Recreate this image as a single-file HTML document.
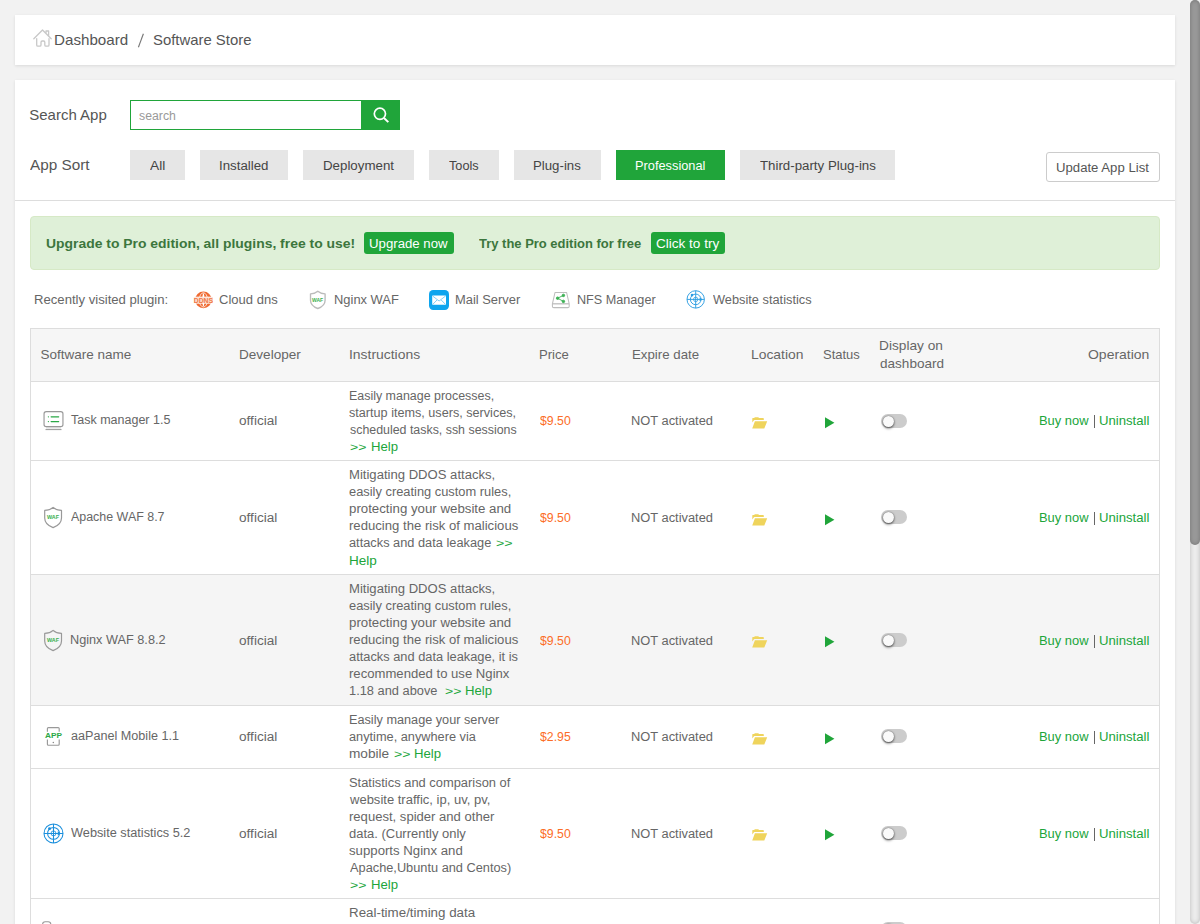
<!DOCTYPE html>
<html><head><meta charset="utf-8"><title>Software Store</title>
<style>
html,body{margin:0;padding:0}
body{width:1200px;height:924px;overflow:hidden;position:relative;background:#f2f2f2;font-family:"Liberation Sans",sans-serif}
.a{position:absolute}
.t{position:absolute;white-space:pre;line-height:1;transform-origin:0 0}
.card{position:absolute;background:#fff;box-shadow:0 1px 3px rgba(0,0,0,.10)}
.sb{position:absolute;top:150px;height:30px;background:#e6e6e6}
.gb{position:absolute;top:232px;height:22px;background:#20a53a;border-radius:3px}
.hl{position:absolute;left:30px;width:1130px;height:1px;background:#ddd}
.tg{position:absolute;width:26px;height:14px;border-radius:7px;background:#ccc}
.tg i{position:absolute;left:1.8px;top:1.7px;width:11px;height:11px;border-radius:6px;background:#fafafa;box-shadow:0 1.5px 2.5px rgba(0,0,0,.5),0 0 1.5px rgba(0,0,0,.55)}
svg{position:absolute;overflow:visible}
</style></head><body>


<div class="card" style="left:15px;top:15px;width:1160px;height:50px"></div>
<div class="card" style="left:15px;top:80px;width:1160px;height:860px"></div>
<svg style="left:33px;top:28px" width="20" height="20" viewBox="0 0 20 20" fill="none" stroke="#c8c8c8" stroke-width="1.3" stroke-linecap="round" stroke-linejoin="round">
<path d="M0.8 10.8L9.5 2L18.2 10.8"/><path d="M13 4.6V3H15.6V7.6"/>
<path d="M3.7 10.6V17Q3.7 18.2 4.9 18.2H6.8Q8 18.2 8 17V14.2Q8 13 9.2 13H10.6Q11.8 13 11.8 14.2V17Q11.8 18.2 13 18.2H14.8Q16 18.2 16 17V10.6"/></svg>
<div class="a" style="left:130px;top:100px;width:230px;height:28px;border:1px solid #20a53a;background:#fff"></div>
<div class="a" style="left:361px;top:100px;width:39px;height:30px;background:#20a53a"></div>
<svg style="left:361px;top:100px" width="39" height="30" viewBox="0 0 39 30" fill="none" stroke="#fff" stroke-width="1.7" stroke-linecap="round"><circle cx="18.9" cy="13.8" r="5.6"/><path d="M23 18L27.3 22.1" stroke-width="2" stroke-linecap="butt"/></svg>
<div class="sb" style="left:130px;width:55px"></div>
<div class="sb" style="left:200px;width:88px"></div>
<div class="sb" style="left:303px;width:111px"></div>
<div class="sb" style="left:429px;width:70px"></div>
<div class="sb" style="left:514px;width:87px"></div>
<div class="sb" style="left:616px;width:109px;background:#20a53a"></div>
<div class="sb" style="left:740px;width:155px"></div>
<div class="a" style="left:1046px;top:152px;width:112px;height:28px;border:1px solid #ccc;border-radius:3px;background:#fff"></div>
<div class="a" style="left:15px;top:200px;width:1160px;height:1px;background:#ddd"></div>
<div class="a" style="left:30px;top:216px;width:1128px;height:52px;border:1px solid #d6e9c6;border-radius:4px;background:#dff0d8"></div>
<div class="gb" style="left:364px;width:90px"></div><div class="gb" style="left:651px;width:74px"></div>
<div class="a" style="left:30px;top:328px;width:1128px;height:620px;border:1px solid #ddd;border-bottom:none"></div>
<div class="a" style="left:31px;top:329px;width:1128px;height:52px;background:#f6f6f6"></div>
<div class="a" style="left:31px;top:575px;width:1128px;height:130px;background:#f5f5f5"></div>
<div class="hl" style="top:381px"></div>
<div class="hl" style="top:460px"></div>
<div class="hl" style="top:574px"></div>
<div class="hl" style="top:705px"></div>
<div class="hl" style="top:768px"></div>
<div class="hl" style="top:898px"></div>
<svg style="left:751.6px;top:416.6px" width="16" height="12" viewBox="0 0 16 12"><path fill="#efd45c" d="M0.3 5.6V1.6Q0.3 1.1 .8 1.1H2.2L2.8 .2H6.4L6.9 1.1H11.2Q11.8 1.1 11.8 1.7V3H2.6Q1.9 3 1.6 3.7ZM2.9 4.3H15.2L12.3 11.4H0.2Z"/></svg>
<svg style="left:825px;top:416.8px" width="10" height="12" viewBox="0 0 10 12"><path fill="#20a53a" d="M0 0.2L9.4 5.7L0 11.2Z"/></svg>
<div class="tg" style="left:881px;top:414px"><i></i></div>
<div class="a" style="left:1094px;top:415px;width:1px;height:13px;background:#666"></div>
<svg style="left:751.6px;top:513.6px" width="16" height="12" viewBox="0 0 16 12"><path fill="#efd45c" d="M0.3 5.6V1.6Q0.3 1.1 .8 1.1H2.2L2.8 .2H6.4L6.9 1.1H11.2Q11.8 1.1 11.8 1.7V3H2.6Q1.9 3 1.6 3.7ZM2.9 4.3H15.2L12.3 11.4H0.2Z"/></svg>
<svg style="left:825px;top:513.8px" width="10" height="12" viewBox="0 0 10 12"><path fill="#20a53a" d="M0 0.2L9.4 5.7L0 11.2Z"/></svg>
<div class="tg" style="left:881px;top:510px"><i></i></div>
<div class="a" style="left:1094px;top:512px;width:1px;height:13px;background:#666"></div>
<svg style="left:751.6px;top:635.6px" width="16" height="12" viewBox="0 0 16 12"><path fill="#efd45c" d="M0.3 5.6V1.6Q0.3 1.1 .8 1.1H2.2L2.8 .2H6.4L6.9 1.1H11.2Q11.8 1.1 11.8 1.7V3H2.6Q1.9 3 1.6 3.7ZM2.9 4.3H15.2L12.3 11.4H0.2Z"/></svg>
<svg style="left:825px;top:635.8px" width="10" height="12" viewBox="0 0 10 12"><path fill="#20a53a" d="M0 0.2L9.4 5.7L0 11.2Z"/></svg>
<div class="tg" style="left:881px;top:633px"><i></i></div>
<div class="a" style="left:1094px;top:635px;width:1px;height:13px;background:#666"></div>
<svg style="left:751.6px;top:732.6px" width="16" height="12" viewBox="0 0 16 12"><path fill="#efd45c" d="M0.3 5.6V1.6Q0.3 1.1 .8 1.1H2.2L2.8 .2H6.4L6.9 1.1H11.2Q11.8 1.1 11.8 1.7V3H2.6Q1.9 3 1.6 3.7ZM2.9 4.3H15.2L12.3 11.4H0.2Z"/></svg>
<svg style="left:825px;top:732.8px" width="10" height="12" viewBox="0 0 10 12"><path fill="#20a53a" d="M0 0.2L9.4 5.7L0 11.2Z"/></svg>
<div class="tg" style="left:881px;top:729px"><i></i></div>
<div class="a" style="left:1094px;top:731px;width:1px;height:13px;background:#666"></div>
<svg style="left:751.6px;top:828.6px" width="16" height="12" viewBox="0 0 16 12"><path fill="#efd45c" d="M0.3 5.6V1.6Q0.3 1.1 .8 1.1H2.2L2.8 .2H6.4L6.9 1.1H11.2Q11.8 1.1 11.8 1.7V3H2.6Q1.9 3 1.6 3.7ZM2.9 4.3H15.2L12.3 11.4H0.2Z"/></svg>
<svg style="left:825px;top:828.8px" width="10" height="12" viewBox="0 0 10 12"><path fill="#20a53a" d="M0 0.2L9.4 5.7L0 11.2Z"/></svg>
<div class="tg" style="left:881px;top:826px"><i></i></div>
<div class="a" style="left:1094px;top:828px;width:1px;height:13px;background:#666"></div>
<div class="tg" style="left:881px;top:922px"><i></i></div>
<svg style="left:0;top:0" width="1200" height="924" viewBox="0 0 1200 924" font-family="Liberation Sans, sans-serif">
<path d="M138.4 47.2L143.4 33.7" stroke="#777" stroke-width="1.1" fill="none"/>
<circle cx="203.4" cy="299.9" r="8.3" fill="#ef6a31"/><g fill="none" stroke="#fff" stroke-width="0.75"><ellipse cx="203.4" cy="299.9" rx="1.05" ry="6.64" fill="#fff" stroke="none"/><ellipse cx="203.4" cy="299.9" rx="4.15" ry="7.14"/></g><rect x="193.40" y="296.70" width="20.00" height="6.9" fill="#fff"/><rect x="193.80" y="297.30" width="19.20" height="5.8" fill="#fbdccd"/><text x="193.70" y="303.10" font-size="7.8" font-weight="700" fill="#ef6a31" fill-opacity=".88" textLength="19.40" lengthAdjust="spacingAndGlyphs">DDNS</text>
<path fill="none" stroke="#bbb" stroke-width="1.35" stroke-linejoin="round" d="M317.8 291.2Q320.72 293.80 325.10 293.80V300.20C325.10 304.35 321.45 307.12 317.8 308.50C314.15 307.12 310.50 304.35 310.50 300.20V293.80Q314.88 293.80 317.8 291.2Z"/><text x="312" y="301.9" font-size="5.6" font-weight="700" fill="#3bb04f" textLength="11.2" lengthAdjust="spacingAndGlyphs">WAF</text>
<rect x="429" y="290" width="20" height="20" rx="4.2" fill="#0ea5ee"/><rect x="432.2" y="295.6" width="13.8" height="9.2" rx=".6" fill="#fff"/><g fill="none" stroke="#6cc6f3" stroke-width=".85"><path d="M432.6 296L439.1 301L445.6 296"/><path d="M432.6 304.5L437 300M445.6 304.5L441.2 300"/></g>
<g fill="none" stroke="#bdbdbd" stroke-width="1.05" stroke-linejoin="round"><path d="M555.0 292.5H566.5999999999999L569.1999999999999 303.9V306.2Q569.1999999999999 307.6 567.8 307.6H553.8Q552.4 307.6 552.4 306.2V303.9Z"/><path d="M552.5999999999999 303.8H569.0" stroke-width="1.3"/></g><g stroke="#3cb055" stroke-width=".9" fill="#3cb055"><path fill="none" d="M563.4 295.4L557.5999999999999 298.2L563.4 301.4"/><circle cx="563.4" cy="295.4" r="1.25"/><circle cx="557.5999999999999" cy="298.2" r="1.25"/><circle cx="563.4" cy="301.4" r="1.25"/></g>
<g fill="none" stroke="#2c9de2" stroke-width="0.95"><circle cx="695.7" cy="299.4" r="8.7"/><circle cx="695.7" cy="299.4" r="5.3"/><circle cx="695.7" cy="299.4" r="2.23" stroke-width="0.76"/><path d="M695.7 290.7V308.09999999999997M687.0 299.4H704.4000000000001"/></g><circle cx="692.05" cy="295.05" r="1.35" fill="#2c9de2"/><path fill="#2c9de2" d="M699.62 297.49L702.66 299.4L699.62 301.31Z"/>
<rect x="46.0" y="427" width="15" height="2.2" fill="#ececec"/><rect x="44.05" y="411.55" width="18.9" height="15.1" rx="2.2" fill="#fff" stroke="#999" stroke-width="1.15"/><path d="M45.5 429.6H61.5" stroke="#999" stroke-width="1"/><g stroke="#2aa846" stroke-width="1.15" stroke-linecap="round"><path d="M51.1 416.8H58.7M51.1 421.6H58.7"/><path d="M48.4 416.8h.01M48.4 421.6h.01" stroke-width="1.3"/></g>
<path fill="none" stroke="#999" stroke-width="1.2" stroke-linejoin="round" d="M53.1 507.4Q56.46 510.43 61.50 510.43V517.90C61.50 522.75 57.30 525.98 53.1 527.60C48.90 525.98 44.70 522.75 44.70 517.90V510.43Q49.74 510.43 53.1 507.4Z"/><text x="47" y="519.2" font-size="6.0" font-weight="700" fill="#3bb04f" textLength="12.0" lengthAdjust="spacingAndGlyphs">WAF</text>
<path fill="none" stroke="#999" stroke-width="1.2" stroke-linejoin="round" d="M53.1 630.4Q56.46 633.43 61.50 633.43V640.90C61.50 645.75 57.30 648.98 53.1 650.60C48.90 648.98 44.70 645.75 44.70 640.90V633.43Q49.74 633.43 53.1 630.4Z"/><text x="47" y="642.2" font-size="6.0" font-weight="700" fill="#3bb04f" textLength="12.0" lengthAdjust="spacingAndGlyphs">WAF</text>
<g fill="none" stroke="#999" stroke-width="1.15" stroke-linejoin="round"><path d="M47.4 731.8V728.6Q47.4 727.6 48.4 727.6H58.199999999999996Q59.199999999999996 727.6 59.199999999999996 728.6V731.8"/><path d="M47.4 739.6V744.2Q47.4 745.2 48.4 745.2H58.199999999999996Q59.199999999999996 745.2 59.199999999999996 744.2V739.6"/></g><circle cx="53.3" cy="742.6" r=".75" fill="#888"/><text x="45.0" y="738.3" font-size="7.2" font-weight="700" fill="#2aa846" textLength="17" lengthAdjust="spacingAndGlyphs">APP</text>
<g fill="none" stroke="#1b8fdc" stroke-width="1.05"><circle cx="53.5" cy="833.4" r="9.5"/><circle cx="53.5" cy="833.4" r="5.9"/><circle cx="53.5" cy="833.4" r="2.48" stroke-width="0.8400000000000001"/><path d="M53.5 823.9V842.9M44.0 833.4H63.0"/></g><circle cx="49.51" cy="828.65" r="1.47" fill="#1b8fdc"/><path fill="#1b8fdc" d="M57.77 831.31L61.10 833.4L57.77 835.49Z"/>
<rect x="42.6" y="921.8" width="8.2" height="10" rx="2.6" fill="none" stroke="#999" stroke-width="1.1"/>
</svg>
<span class="t" style="left:54.24px;top:32px;font-size:15px;color:#555;transform:scaleX(1.0105);">Dashboard</span>
<span class="t" style="left:153.46px;top:32px;font-size:15px;color:#555;transform:scaleX(0.9923);">Software Store</span>
<span class="t" style="left:29.25px;top:107px;font-size:15px;color:#555;">Search App</span>
<span class="t" style="left:138.94px;top:110px;font-size:12px;color:#999;transform:scaleX(1.0229);">search</span>
<span class="t" style="left:30.00px;top:157px;font-size:15px;color:#555;transform:scaleX(1.0215);">App Sort</span>
<span class="t" style="left:150.20px;top:160px;font-size:12.5px;color:#444;transform:scaleX(1.1000);">All</span>
<span class="t" style="left:218.87px;top:160px;font-size:12.5px;color:#444;transform:scaleX(1.0629);">Installed</span>
<span class="t" style="left:322.94px;top:160px;font-size:12.5px;color:#444;transform:scaleX(1.0646);">Deployment</span>
<span class="t" style="left:449.25px;top:160px;font-size:12.5px;color:#444;transform:scaleX(1.0175);">Tools</span>
<span class="t" style="left:532.94px;top:160px;font-size:12.5px;color:#444;transform:scaleX(1.0583);">Plug-ins</span>
<span class="t" style="left:634.68px;top:160px;font-size:12.5px;color:#fff;transform:scaleX(1.0239);">Professional</span>
<span class="t" style="left:759.73px;top:160px;font-size:12.5px;color:#444;transform:scaleX(1.0624);">Third-party Plug-ins</span>
<span class="t" style="left:1056.15px;top:162px;font-size:12.5px;color:#555;transform:scaleX(1.0521);">Update App List</span>
<span class="t" style="left:45.53px;top:237px;font-size:13.5px;color:#3c763d;font-weight:700;transform:scaleX(1.0302);">Upgrade to Pro edition, all plugins, free to use!</span>
<span class="t" style="left:369.24px;top:238px;font-size:12.5px;color:#fff;transform:scaleX(1.0567);">Upgrade now</span>
<span class="t" style="left:479.06px;top:237px;font-size:13.5px;color:#3c763d;font-weight:700;transform:scaleX(0.9607);">Try the Pro edition for free</span>
<span class="t" style="left:655.89px;top:238px;font-size:12.5px;color:#fff;transform:scaleX(1.0835);">Click to try</span>
<span class="t" style="left:34.25px;top:294px;font-size:12.5px;color:#666;transform:scaleX(1.0497);">Recently visited plugin:</span>
<span class="t" style="left:218.92px;top:294px;font-size:12.5px;color:#666;transform:scaleX(1.0418);">Cloud dns</span>
<span class="t" style="left:333.97px;top:294px;font-size:12.5px;color:#666;transform:scaleX(1.0335);">Nginx WAF</span>
<span class="t" style="left:454.97px;top:294px;font-size:12.5px;color:#666;transform:scaleX(1.0323);">Mail Server</span>
<span class="t" style="left:576.69px;top:294px;font-size:12.5px;color:#666;transform:scaleX(1.0105);">NFS Manager</span>
<span class="t" style="left:712.70px;top:294px;font-size:12.5px;color:#666;transform:scaleX(1.0235);">Website statistics</span>
<span class="t" style="left:40.45px;top:348px;font-size:13.5px;color:#666;">Software name</span>
<span class="t" style="left:239.00px;top:348px;font-size:13.5px;color:#666;transform:scaleX(1.0041);">Developer</span>
<span class="t" style="left:348.71px;top:348px;font-size:13.5px;color:#666;transform:scaleX(1.0305);">Instructions</span>
<span class="t" style="left:539.33px;top:348px;font-size:13.5px;color:#666;transform:scaleX(0.9709);">Price</span>
<span class="t" style="left:631.72px;top:348px;font-size:13.5px;color:#666;transform:scaleX(0.9828);">Expire date</span>
<span class="t" style="left:751.17px;top:348px;font-size:13.5px;color:#666;transform:scaleX(1.0274);">Location</span>
<span class="t" style="left:822.78px;top:348px;font-size:13.5px;color:#666;transform:scaleX(0.9622);">Status</span>
<span class="t" style="left:878.99px;top:339px;font-size:13.5px;color:#666;transform:scaleX(1.0139);">Display on</span>
<span class="t" style="left:879.50px;top:357px;font-size:13.5px;color:#666;transform:scaleX(1.0040);">dashboard</span>
<span class="t" style="left:1087.92px;top:348px;font-size:13.5px;color:#666;transform:scaleX(1.0355);">Operation</span>
<span class="t" style="left:71.00px;top:414px;font-size:12.5px;color:#666;">Task manager 1.5</span>
<span class="t" style="left:239.46px;top:415px;font-size:12.5px;color:#666;transform:scaleX(1.0882);">official</span>
<span class="t" style="left:540.25px;top:415px;font-size:12.5px;color:#fc6d26;transform:scaleX(0.9836);">$9.50</span>
<span class="t" style="left:631.47px;top:415px;font-size:12.5px;color:#666;transform:scaleX(1.0289);">NOT activated</span>
<span class="t" style="left:1038.97px;top:415px;font-size:12.5px;color:#20a53a;transform:scaleX(1.0319);">Buy now</span>
<span class="t" style="left:1098.70px;top:415px;font-size:12.5px;color:#20a53a;transform:scaleX(1.0508);">Uninstall</span>
<span class="t" style="left:349.01px;top:390px;font-size:12.5px;color:#666;transform:scaleX(0.9948);">Easily manage processes,</span>
<span class="t" style="left:349.49px;top:407px;font-size:12.5px;color:#666;transform:scaleX(1.0107);">startup items, users, services,</span>
<span class="t" style="left:349.50px;top:424px;font-size:12.5px;color:#666;transform:scaleX(0.9910);">scheduled tasks, ssh sessions</span>
<span class="t" style="left:350.14px;top:442px;font-size:11.5px;color:#20a53a;transform:scaleX(1.2200);">&gt;&gt;</span>
<span class="t" style="left:370.70px;top:441px;font-size:12.5px;color:#20a53a;transform:scaleX(1.0515);">Help</span>
<span class="t" style="left:71.25px;top:511px;font-size:12.5px;color:#666;transform:scaleX(0.9947);">Apache WAF 8.7</span>
<span class="t" style="left:239.46px;top:512px;font-size:12.5px;color:#666;transform:scaleX(1.0882);">official</span>
<span class="t" style="left:540.25px;top:512px;font-size:12.5px;color:#fc6d26;transform:scaleX(0.9836);">$9.50</span>
<span class="t" style="left:631.47px;top:512px;font-size:12.5px;color:#666;transform:scaleX(1.0289);">NOT activated</span>
<span class="t" style="left:1038.97px;top:512px;font-size:12.5px;color:#20a53a;transform:scaleX(1.0319);">Buy now</span>
<span class="t" style="left:1098.70px;top:512px;font-size:12.5px;color:#20a53a;transform:scaleX(1.0508);">Uninstall</span>
<span class="t" style="left:348.95px;top:469px;font-size:12.5px;color:#666;transform:scaleX(1.0473);">Mitigating DDOS attacks,</span>
<span class="t" style="left:349.49px;top:486px;font-size:12.5px;color:#666;transform:scaleX(1.0288);">easily creating custom rules,</span>
<span class="t" style="left:349.20px;top:503px;font-size:12.5px;color:#666;transform:scaleX(1.0612);">protecting your website and</span>
<span class="t" style="left:349.21px;top:520px;font-size:12.5px;color:#666;transform:scaleX(1.0500);">reducing the risk of malicious</span>
<span class="t" style="left:349.49px;top:537px;font-size:12.5px;color:#666;transform:scaleX(1.0236);">attacks and data leakage</span>
<span class="t" style="left:496.38px;top:538px;font-size:11.5px;color:#20a53a;transform:scaleX(1.2400);">&gt;&gt;</span>
<span class="t" style="left:348.92px;top:555px;font-size:12.5px;color:#20a53a;transform:scaleX(1.0825);">Help</span>
<span class="t" style="left:70.23px;top:634px;font-size:12.5px;color:#666;transform:scaleX(1.0162);">Nginx WAF 8.8.2</span>
<span class="t" style="left:239.46px;top:635px;font-size:12.5px;color:#666;transform:scaleX(1.0882);">official</span>
<span class="t" style="left:540.25px;top:635px;font-size:12.5px;color:#fc6d26;transform:scaleX(0.9836);">$9.50</span>
<span class="t" style="left:631.47px;top:635px;font-size:12.5px;color:#666;transform:scaleX(1.0289);">NOT activated</span>
<span class="t" style="left:1038.97px;top:635px;font-size:12.5px;color:#20a53a;transform:scaleX(1.0319);">Buy now</span>
<span class="t" style="left:1098.70px;top:635px;font-size:12.5px;color:#20a53a;transform:scaleX(1.0508);">Uninstall</span>
<span class="t" style="left:348.95px;top:583px;font-size:12.5px;color:#666;transform:scaleX(1.0473);">Mitigating DDOS attacks,</span>
<span class="t" style="left:349.49px;top:600px;font-size:12.5px;color:#666;transform:scaleX(1.0288);">easily creating custom rules,</span>
<span class="t" style="left:349.20px;top:617px;font-size:12.5px;color:#666;transform:scaleX(1.0612);">protecting your website and</span>
<span class="t" style="left:349.21px;top:634px;font-size:12.5px;color:#666;transform:scaleX(1.0500);">reducing the risk of malicious</span>
<span class="t" style="left:349.49px;top:651px;font-size:12.5px;color:#666;transform:scaleX(1.0260);">attacks and data leakage, it is</span>
<span class="t" style="left:349.21px;top:668px;font-size:12.5px;color:#666;transform:scaleX(1.0493);">recommended to use Nginx</span>
<span class="t" style="left:348.97px;top:685px;font-size:12.5px;color:#666;transform:scaleX(1.0265);">1.18 and above</span>
<span class="t" style="left:444.89px;top:686px;font-size:11.5px;color:#20a53a;transform:scaleX(1.2200);">&gt;&gt;</span>
<span class="t" style="left:465.45px;top:685px;font-size:12.5px;color:#20a53a;transform:scaleX(1.0515);">Help</span>
<span class="t" style="left:70.75px;top:730px;font-size:12.5px;color:#666;transform:scaleX(1.0094);">aaPanel Mobile 1.1</span>
<span class="t" style="left:239.46px;top:731px;font-size:12.5px;color:#666;transform:scaleX(1.0882);">official</span>
<span class="t" style="left:540.25px;top:731px;font-size:12.5px;color:#fc6d26;transform:scaleX(0.9836);">$2.95</span>
<span class="t" style="left:631.47px;top:731px;font-size:12.5px;color:#666;transform:scaleX(1.0289);">NOT activated</span>
<span class="t" style="left:1038.97px;top:731px;font-size:12.5px;color:#20a53a;transform:scaleX(1.0319);">Buy now</span>
<span class="t" style="left:1098.70px;top:731px;font-size:12.5px;color:#20a53a;transform:scaleX(1.0508);">Uninstall</span>
<span class="t" style="left:348.98px;top:714px;font-size:12.5px;color:#666;transform:scaleX(1.0153);">Easily manage your server</span>
<span class="t" style="left:349.49px;top:731px;font-size:12.5px;color:#666;transform:scaleX(1.0202);">anytime, anywhere via</span>
<span class="t" style="left:349.18px;top:748px;font-size:12.5px;color:#666;transform:scaleX(1.0915);">mobile</span>
<span class="t" style="left:393.64px;top:749px;font-size:11.5px;color:#20a53a;transform:scaleX(1.2200);">&gt;&gt;</span>
<span class="t" style="left:414.20px;top:748px;font-size:12.5px;color:#20a53a;transform:scaleX(1.0515);">Help</span>
<span class="t" style="left:71.25px;top:827px;font-size:12.5px;color:#666;transform:scaleX(1.0193);">Website statistics 5.2</span>
<span class="t" style="left:239.46px;top:828px;font-size:12.5px;color:#666;transform:scaleX(1.0882);">official</span>
<span class="t" style="left:540.25px;top:828px;font-size:12.5px;color:#fc6d26;transform:scaleX(0.9836);">$9.50</span>
<span class="t" style="left:631.47px;top:828px;font-size:12.5px;color:#666;transform:scaleX(1.0289);">NOT activated</span>
<span class="t" style="left:1038.97px;top:828px;font-size:12.5px;color:#20a53a;transform:scaleX(1.0319);">Buy now</span>
<span class="t" style="left:1098.70px;top:828px;font-size:12.5px;color:#20a53a;transform:scaleX(1.0508);">Uninstall</span>
<span class="t" style="left:349.23px;top:777px;font-size:12.5px;color:#666;transform:scaleX(1.0321);">Statistics and comparison of</span>
<span class="t" style="left:350.00px;top:794px;font-size:12.5px;color:#666;transform:scaleX(1.0411);">website traffic, ip, uv, pv,</span>
<span class="t" style="left:349.22px;top:811px;font-size:12.5px;color:#666;transform:scaleX(1.0453);">request, spider and other</span>
<span class="t" style="left:349.48px;top:828px;font-size:12.5px;color:#666;transform:scaleX(1.0379);">data. (Currently only</span>
<span class="t" style="left:349.47px;top:845px;font-size:12.5px;color:#666;transform:scaleX(1.0563);">supports Nginx and</span>
<span class="t" style="left:350.00px;top:862px;font-size:12.5px;color:#666;transform:scaleX(1.0223);">Apache,Ubuntu and Centos)</span>
<span class="t" style="left:350.14px;top:880px;font-size:11.5px;color:#20a53a;transform:scaleX(1.2200);">&gt;&gt;</span>
<span class="t" style="left:370.70px;top:879px;font-size:12.5px;color:#20a53a;transform:scaleX(1.0515);">Help</span>
<span class="t" style="left:348.93px;top:907px;font-size:12.5px;color:#666;transform:scaleX(1.0684);">Real-time/timing data</span>
<div class="a" style="left:1190px;top:0;width:10px;height:924px;background:#f1f1f1"></div>
<div class="a" style="left:1190px;top:0;width:10px;height:924px;border-radius:5px;background:#ececec;box-shadow:inset 0 0 4px rgba(0,0,0,.22)"></div>
<div class="a" style="left:1190px;top:0;width:10px;height:545px;border-radius:5px;background:#999;box-shadow:inset 0 0 4px rgba(0,0,0,.25)"></div>
</body></html>
